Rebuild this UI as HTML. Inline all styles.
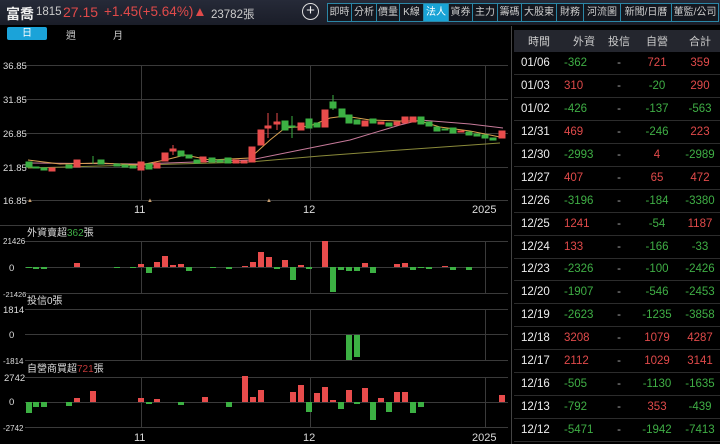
<!DOCTYPE html>
<html><head><meta charset="utf-8"><style>
*{margin:0;padding:0;box-sizing:border-box}
body{width:720px;height:444px;background:#000;overflow:hidden;font-family:"Liberation Sans","Noto Sans CJK TC",sans-serif;color:#ddd;position:relative}
.hdr{position:absolute;left:0;top:0;width:720px;height:25px;background:linear-gradient(#262a38,#1a1d28);}
.t{position:absolute;white-space:nowrap}
.tabs{position:absolute;left:327px;top:3px;height:19px;display:flex;border:1px solid #2b86a6}
.tabs div{border-right:1px solid #2b86a6;font-size:10px;color:#ccc;line-height:17px;text-align:center;background:#14171f}
.tabs div.a{background:#19a3d6;color:#fff}
table{position:absolute;left:514px;top:30px;width:206px;border-collapse:collapse;font-size:11.5px}
th{background:#24262e;height:22px;color:#ccc;font-weight:normal;font-size:11px}
td{height:22.9px;border-bottom:1px solid #2c2c2c;color:#eee}
.g{color:#3fae45}.r{color:#e04a4a}.d{color:#aaa;text-align:center}
</style></head><body>
<div class="hdr"></div>
<div class="t" style="left:6px;top:4px;font-size:14px;font-weight:bold;color:#eee">富喬</div>
<div class="t" style="left:36px;top:6px;font-size:11.5px;color:#ccc">1815</div>
<div class="t" style="left:63px;top:4px;font-size:14px;color:#e04a4a">27.15</div>
<div class="t" style="left:104px;top:4px;font-size:13.5px;color:#e04a4a">+1.45(+5.64%)▲</div>
<div class="t" style="left:211px;top:6px;font-size:11.5px;color:#ccc">23782張</div>
<div class="t" style="left:302px;top:3px;width:17px;height:17px;border:1.5px solid #ddd;border-radius:50%;text-align:center;line-height:13px;font-size:15px;color:#eee">+</div>
<div class="tabs">
<div style="width:24px">即時</div><div style="width:25px">分析</div><div style="width:23px">價量</div><div style="width:24px">K線</div><div class="a" style="width:25px">法人</div><div style="width:24px">資券</div><div style="width:25px">主力</div><div style="width:24px">籌碼</div><div style="width:35px">大股東</div><div style="width:27px">財務</div><div style="width:37px">河流圖</div><div style="width:51px">新聞/日曆</div><div style="width:46px;border-right:none">董監/公司</div>
</div>
<div class="t" style="left:7px;top:27px;width:40px;height:13px;background:#1ba3d9;border-radius:2px;color:#fff;font-size:10px;text-align:center;line-height:13px">日</div>
<div class="t" style="left:66px;top:27px;font-size:10px;color:#ccc">週</div>
<div class="t" style="left:113px;top:27px;font-size:10px;color:#ccc">月</div>

<svg style="position:absolute;left:0;top:0" width="512" height="444" font-family="Liberation Sans,Noto Sans CJK TC,sans-serif">
<g stroke="#3a3a3a" stroke-width="1">
<line x1="25" y1="65.5" x2="508" y2="65.5"/><line x1="25" y1="99.5" x2="508" y2="99.5"/><line x1="25" y1="133.5" x2="508" y2="133.5"/><line x1="25" y1="167.5" x2="508" y2="167.5"/><line x1="25" y1="200.5" x2="508" y2="200.5"/>
<line x1="141.5" y1="65" x2="141.5" y2="200"/><line x1="310.5" y1="65" x2="310.5" y2="200"/><line x1="485.5" y1="65" x2="485.5" y2="200"/>
<line x1="25" y1="241.5" x2="508" y2="241.5"/><line x1="25" y1="267.5" x2="508" y2="267.5"/><line x1="25" y1="293.5" x2="508" y2="293.5"/>
<line x1="25" y1="309.5" x2="508" y2="309.5"/><line x1="25" y1="334.5" x2="508" y2="334.5"/><line x1="25" y1="360.5" x2="508" y2="360.5"/>
<line x1="25" y1="377.5" x2="508" y2="377.5"/><line x1="25" y1="402.5" x2="508" y2="402.5"/><line x1="25" y1="427.5" x2="508" y2="427.5"/>
<line x1="141.5" y1="241" x2="141.5" y2="293"/><line x1="310.5" y1="241" x2="310.5" y2="293"/><line x1="485.5" y1="241" x2="485.5" y2="293"/>
<line x1="141.5" y1="309" x2="141.5" y2="360"/><line x1="310.5" y1="309" x2="310.5" y2="360"/><line x1="485.5" y1="309" x2="485.5" y2="360"/>
<line x1="141.5" y1="377" x2="141.5" y2="427"/><line x1="310.5" y1="377" x2="310.5" y2="427"/><line x1="485.5" y1="377" x2="485.5" y2="427"/>
<line x1="0" y1="225.5" x2="512" y2="225.5"/>
<line x1="511.5" y1="26" x2="511.5" y2="444" stroke="#444"/>
</g>
<g font-size="9.5" fill="#ddd">
<text x="3" y="69">36.85</text><text x="3" y="103">31.85</text><text x="3" y="137">26.85</text><text x="3" y="171">21.85</text><text x="3" y="204">16.85</text>
<text x="134" y="213" font-size="11">11</text><text x="303" y="213" font-size="11">12</text><text x="472" y="213" font-size="11">2025</text>
<text x="3" y="244" font-size="8">21426</text><text x="9" y="271">0</text><text x="3" y="297" font-size="7.5">-21426</text>
<text x="3" y="313">1814</text><text x="9" y="338">0</text><text x="3" y="364" font-size="8">-1814</text>
<text x="4" y="381">2742</text><text x="9" y="405">0</text><text x="3" y="431" font-size="8">-2742</text>
<text x="134" y="441" font-size="11">11</text><text x="303" y="441" font-size="11">12</text><text x="472" y="441" font-size="11">2025</text>
<text x="27" y="236" font-size="10">外資賣超<tspan fill="#3fae45">362</tspan>張</text>
<text x="27" y="304" font-size="10">投信0張</text>
<text x="27" y="372" font-size="10">自營商買超<tspan fill="#c03838">721</tspan>張</text>
</g>
<text x="27" y="202" font-size="6" fill="#c9a070">▲</text><text x="147" y="202" font-size="6" fill="#c9a070">▲</text><text x="266" y="202" font-size="6" fill="#c9a070">▲</text>
<g fill="none" stroke-width="1">
<polyline stroke="#8a8a3a" points="28,168 250,162 320,156 400,150 500,143"/>
<polyline stroke="#c77a9a" points="28,163 140,164 250,160 300,150 350,140 400,125 420,120 470,124 503,128"/>
<polyline stroke="#d8a050" points="28,160 60,164 100,163 140,165 165,160 185,155 210,160 250,158 270,140 285,128 310,126 330,118 345,116 370,120 400,121 420,121 440,127 470,131 500,137"/>
</g>
<g fill="#e84c4c" stroke="#e84c4c">
<rect x="49" y="168" width="6" height="3"/><rect x="74" y="160" width="6" height="7"/><rect x="138" y="162" width="6" height="8"/><rect x="154" y="163" width="6" height="5"/><rect x="162" y="153" width="6" height="8"/><rect x="170" y="149" width="6" height="2"/>
<rect x="200" y="157" width="6" height="5"/><rect x="233" y="160" width="6" height="3"/><rect x="241" y="161" width="6" height="2"/><rect x="249" y="147" width="6" height="15"/><rect x="258" y="130" width="6" height="15"/><rect x="265" y="126" width="6" height="2"/><rect x="274" y="122" width="6" height="2"/><rect x="298" y="123" width="6" height="7"/><rect x="322" y="110" width="6" height="17"/><rect x="362" y="121" width="6" height="5"/><rect x="378" y="122" width="6" height="2"/><rect x="394" y="122" width="6" height="3"/><rect x="402" y="117" width="6" height="6"/><rect x="410" y="117" width="6" height="5"/><rect x="458" y="131" width="6" height="1"/><rect x="499" y="131" width="6" height="7"/>
<line x1="173" y1="145" x2="173" y2="155"/><line x1="268" y1="113" x2="268" y2="138"/><line x1="277" y1="113" x2="277" y2="130"/>
</g>
<g fill="#3cb043" stroke="#3cb043">
<rect x="26" y="162" width="6" height="5"/><rect x="33" y="167" width="6" height="1"/><rect x="41" y="168" width="6" height="2"/><rect x="66" y="165" width="6" height="3"/><rect x="98" y="160" width="6" height="4"/><rect x="114" y="164" width="6" height="2"/><rect x="122" y="165" width="6" height="2"/><rect x="130" y="166" width="6" height="2"/><rect x="146" y="164" width="6" height="5"/><rect x="178" y="151" width="6" height="5"/><rect x="186" y="155" width="6" height="3"/><rect x="194" y="160" width="6" height="3"/>
<rect x="209" y="158" width="6" height="4"/><rect x="217" y="160" width="6" height="2"/><rect x="225" y="158" width="6" height="5"/><rect x="282" y="121" width="6" height="9"/><rect x="289" y="126" width="6" height="1"/><rect x="306" y="119" width="6" height="9"/><rect x="314" y="123" width="6" height="4"/><rect x="330" y="102" width="6" height="6"/><rect x="339" y="109" width="6" height="8"/><rect x="346" y="115" width="6" height="8"/><rect x="354" y="120" width="6" height="4"/><rect x="370" y="119" width="6" height="4"/><rect x="386" y="123" width="6" height="3"/><rect x="418" y="117" width="6" height="7"/><rect x="426" y="122" width="6" height="4"/><rect x="434" y="127" width="6" height="4"/><rect x="442" y="129" width="6" height="1"/><rect x="450" y="128" width="6" height="5"/><rect x="466" y="132" width="6" height="3"/><rect x="474" y="134" width="6" height="2"/><rect x="482" y="135" width="6" height="3"/><rect x="490" y="138" width="6" height="2"/>
<line x1="292" y1="116" x2="292" y2="138"/><line x1="333" y1="95" x2="333" y2="110"/><line x1="93" y1="156" x2="93" y2="164"/>
</g>
<!-- foreign -->
<g fill="#e84c4c">
<rect x="74" y="263" width="6" height="4"/><rect x="138" y="264" width="6" height="3"/><rect x="154" y="262" width="6" height="5"/><rect x="162" y="256" width="6" height="11"/><rect x="170" y="265" width="6" height="2"/><rect x="178" y="264" width="6" height="3"/><rect x="242" y="266" width="6" height="1"/><rect x="250" y="262" width="6" height="5"/><rect x="258" y="252" width="6" height="15"/><rect x="266" y="257" width="6" height="10"/><rect x="282" y="260" width="6" height="7"/><rect x="298" y="265" width="6" height="2"/><rect x="322" y="241" width="6" height="26"/><rect x="362" y="263" width="6" height="4"/><rect x="394" y="264" width="6" height="3"/><rect x="402" y="263" width="6" height="4"/><rect x="442" y="266" width="6" height="1"/>
</g>
<g fill="#3cb043">
<rect x="26" y="267" width="6" height="1"/><rect x="33" y="267" width="6" height="2"/><rect x="41" y="267" width="6" height="2"/><rect x="114" y="267" width="6" height="1"/><rect x="130" y="267" width="6" height="1"/><rect x="146" y="267" width="6" height="6"/><rect x="186" y="267" width="6" height="4"/><rect x="210" y="267" width="6" height="1"/><rect x="226" y="267" width="6" height="2"/><rect x="274" y="267" width="6" height="2"/><rect x="290" y="267" width="6" height="13"/><rect x="306" y="267" width="6" height="2"/><rect x="330" y="267" width="6" height="25"/><rect x="338" y="267" width="6" height="3"/><rect x="346" y="267" width="6" height="4"/><rect x="354" y="267" width="6" height="4"/><rect x="370" y="267" width="6" height="6"/><rect x="410" y="267" width="6" height="3"/><rect x="418" y="267" width="6" height="1"/><rect x="426" y="267" width="6" height="2"/><rect x="450" y="267" width="6" height="3"/><rect x="466" y="267" width="6" height="3"/>
<rect x="346" y="335" width="6" height="25"/><rect x="354" y="335" width="6" height="22"/>
</g>
<!-- dealer -->
<g fill="#e84c4c">
<rect x="74" y="398" width="6" height="4"/><rect x="90" y="391" width="6" height="11"/><rect x="138" y="398" width="6" height="4"/><rect x="154" y="399" width="6" height="3"/><rect x="202" y="397" width="6" height="5"/><rect x="242" y="376" width="6" height="26"/><rect x="250" y="397" width="6" height="5"/><rect x="258" y="390" width="6" height="12"/><rect x="290" y="392" width="6" height="10"/><rect x="298" y="385" width="6" height="17"/><rect x="314" y="393" width="6" height="9"/><rect x="322" y="387" width="6" height="15"/><rect x="330" y="400" width="6" height="2"/><rect x="346" y="390" width="6" height="12"/><rect x="362" y="388" width="6" height="14"/><rect x="378" y="398" width="6" height="4"/><rect x="394" y="392" width="6" height="10"/><rect x="402" y="392" width="6" height="10"/><rect x="499" y="395" width="6" height="7"/>
</g>
<g fill="#3cb043">
<rect x="26" y="402" width="6" height="11"/><rect x="33" y="402" width="6" height="5"/><rect x="41" y="402" width="6" height="5"/><rect x="66" y="402" width="6" height="4"/><rect x="146" y="402" width="6" height="2"/><rect x="178" y="402" width="6" height="3"/><rect x="226" y="402" width="6" height="5"/><rect x="306" y="402" width="6" height="10"/><rect x="338" y="402" width="6" height="7"/><rect x="354" y="402" width="6" height="2"/><rect x="370" y="402" width="6" height="18"/><rect x="386" y="402" width="6" height="10"/><rect x="410" y="402" width="6" height="11"/><rect x="418" y="402" width="6" height="5"/>
</g>
</svg>

<table>
<tr><th>時間</th><th>外資</th><th>投信</th><th>自營</th><th>合計</th></tr>
<tr><td style="padding-left:7px">01/06</td><td class="g">-362</td><td class="d">-</td><td class="r" style="text-align:center">721</td><td class="r" style="text-align:center">359</td></tr>
<tr><td style="padding-left:7px">01/03</td><td class="r">310</td><td class="d">-</td><td class="g" style="text-align:center">-20</td><td class="r" style="text-align:center">290</td></tr>
<tr><td style="padding-left:7px">01/02</td><td class="g">-426</td><td class="d">-</td><td class="g" style="text-align:center">-137</td><td class="g" style="text-align:center">-563</td></tr>
<tr><td style="padding-left:7px">12/31</td><td class="r">469</td><td class="d">-</td><td class="g" style="text-align:center">-246</td><td class="r" style="text-align:center">223</td></tr>
<tr><td style="padding-left:7px">12/30</td><td class="g">-2993</td><td class="d">-</td><td class="r" style="text-align:center">4</td><td class="g" style="text-align:center">-2989</td></tr>
<tr><td style="padding-left:7px">12/27</td><td class="r">407</td><td class="d">-</td><td class="r" style="text-align:center">65</td><td class="r" style="text-align:center">472</td></tr>
<tr><td style="padding-left:7px">12/26</td><td class="g">-3196</td><td class="d">-</td><td class="g" style="text-align:center">-184</td><td class="g" style="text-align:center">-3380</td></tr>
<tr><td style="padding-left:7px">12/25</td><td class="r">1241</td><td class="d">-</td><td class="g" style="text-align:center">-54</td><td class="r" style="text-align:center">1187</td></tr>
<tr><td style="padding-left:7px">12/24</td><td class="r">133</td><td class="d">-</td><td class="g" style="text-align:center">-166</td><td class="g" style="text-align:center">-33</td></tr>
<tr><td style="padding-left:7px">12/23</td><td class="g">-2326</td><td class="d">-</td><td class="g" style="text-align:center">-100</td><td class="g" style="text-align:center">-2426</td></tr>
<tr><td style="padding-left:7px">12/20</td><td class="g">-1907</td><td class="d">-</td><td class="g" style="text-align:center">-546</td><td class="g" style="text-align:center">-2453</td></tr>
<tr><td style="padding-left:7px">12/19</td><td class="g">-2623</td><td class="d">-</td><td class="g" style="text-align:center">-1235</td><td class="g" style="text-align:center">-3858</td></tr>
<tr><td style="padding-left:7px">12/18</td><td class="r">3208</td><td class="d">-</td><td class="r" style="text-align:center">1079</td><td class="r" style="text-align:center">4287</td></tr>
<tr><td style="padding-left:7px">12/17</td><td class="r">2112</td><td class="d">-</td><td class="r" style="text-align:center">1029</td><td class="r" style="text-align:center">3141</td></tr>
<tr><td style="padding-left:7px">12/16</td><td class="g">-505</td><td class="d">-</td><td class="g" style="text-align:center">-1130</td><td class="g" style="text-align:center">-1635</td></tr>
<tr><td style="padding-left:7px">12/13</td><td class="g">-792</td><td class="d">-</td><td class="r" style="text-align:center">353</td><td class="g" style="text-align:center">-439</td></tr>
<tr><td style="padding-left:7px">12/12</td><td class="g">-5471</td><td class="d">-</td><td class="g" style="text-align:center">-1942</td><td class="g" style="text-align:center">-7413</td></tr>
</table>
<style>table td:nth-child(1){width:50px}table td:nth-child(2){width:40px}table td:nth-child(3){width:30px}table td:nth-child(4){width:46px}</style>
</body></html>
